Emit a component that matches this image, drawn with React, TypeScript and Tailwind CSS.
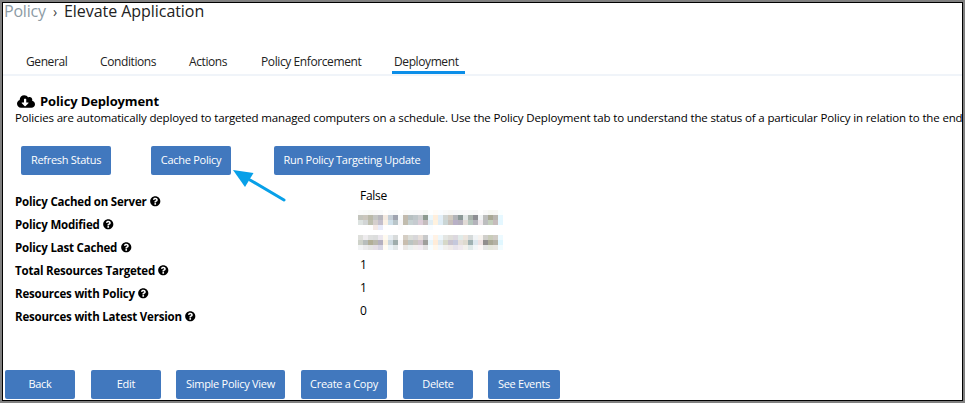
import { FaCloudDownloadAlt, FaQuestionCircle } from "react-icons/fa";

const firstStamp = [
  "#fbfbfb #f9faf9 #f7f8f6 #f9f8f8 #f9fafa #fffefd #fafbfc #f8fafa #ffffff #fafaf8 #fafbfb #f9fafa #fafafa #f6f8f6 #ffffff #fffcf8 #fbfdff #fafafa #f8f8f6 #f8f8f9 #f8faf9 #fafafa #f8faf9 #f8f8f8 #ffffff #fafafa #f6f7f3 #f7f7f5 #fbffff",
  "#c4c5bd #cbc6bd #bab9a9 #c4c5c3 #b8b7bd #f3e9e0 #c4ced6 #9fa4b0 #f7fafa #c2baad #b6c0c1 #bec6c9 #cdced0 #8e9b91 #ebf6fa #ffeedb #e3eff8 #d1d5d3 #d1cac0 #b2b4b8 #8b9896 #e1e6e5 #a9b2ac #8d8e93 #f1f4f5 #bdbebd #a8a895 #b8b5af #e6f8ff",
  "#dde3e1 #d2d5d5 #bebfae #d5cfcd #c4bfcc #fbf2e5 #cfe0ea #b9c5c9 #f6f5f7 #c1bcae #c7d2d3 #c6cbd0 #dccdd8 #c5bdbe #e1edf3 #fff2df #dfedf6 #cad5d5 #c7c0ba #b8b0c6 #b5b1bd #e1dbd6 #b6c7be #b4b3bb #efe8ec #bdbebf #c3cfbc #c6bcbc #e4f7ff",
  "#ffffff #ffffff #fefefe #f4e9e5 #e8ebfa #ffffff #ffffff #ffffff #fbfbfb #fefefe #ffffff #ffffff #ffffff #fefefe #f9fdff #ffffff #ffffff #ffffff #ffffff #ffffff #ffffff #ffffff #ffffff #ffffff #ffffff #ffffff #ffffff #ffffff #ffffff",
];

const secondStamp = [
  "#dedfdb #eeecee #dfe0df #dcdddd #ebe7ee #fffaf0 #e8eef2 #d8dbdb #ffffff #d5cec4 #dcded9 #d8d7da #e8e0db #c8c9ca #f7fbff #fff2e5 #eef7fb #e4e6e3 #dfdeda #dcd8df #e1ebe9 #ece4dd #d5dada #f1f4f6 #f7f3ef #d0cfcb #c9ccb9 #d0cbc5 #edfaff",
  "#ced2c9 #b8bebc #b2af98 #bab9ae #b4b0c0 #f9f0df #cad7de #9fadac #f7f6f7 #c8bdae #bbc4c2 #c8c5bf #d1c4ce #9e9f9c #e8f5fa #ffecd8 #dee9ef #d6d8c8 #c9c3cf #c5c8dc #e5dfda #dedacf #9fb1b2 #dde7ee #efe2e3 #918e8e #aaa996 #b4b2a5 #e0f7ff",
  "#f2f4f5 #ebebec #e4e5e4 #e5dfe7 #d7d6e4 #fffcf4 #edf4f8 #e1e7e8 #fdfcfe #eae7e5 #ebf0f0 #f3f0ef #f2edf3 #e3e2e3 #f6fdff #fff7eb #f1f7fc #f1f0ee #efeae8 #e7e3eb #efe9ee #f3f1ed #e0e9e9 #f3f6f8 #fcf7f7 #e5e5e5 #e5e7dd #e9e7e1 #f2fcff",
];

function Redacted({ rows }: { rows: string[] }) {
  return (
    <div className="-ml-0.5 grid w-[145px] grid-cols-[repeat(29,5px)] auto-rows-[5px]">
      {rows.flatMap((row, y) =>
        row.split(" ").map((color, x) => <i key={`${y}-${x}`} style={{ backgroundColor: color }} />)
      )}
    </div>
  );
}

function Button({ label, className }: { label: string; className: string }) {
  return (
    <button className={`flex h-[29px] shrink-0 items-center justify-center rounded-[2px] bg-[#4178be] text-[11px] font-medium tracking-[-0.28px] whitespace-nowrap text-white ${className}`}>
      {label}
    </button>
  );
}

const labels = [
  ["Policy Cached on Server", "w-[132px]"],
  ["Policy Modified", "w-[85px]"],
  ["Policy Last Cached", "w-[103px]"],
  ["Total Resources Targeted", "w-[140px]"],
  ["Resources with Policy", "w-[120px]"],
  ["Resources with Latest Version", "w-[167px]"],
];

export default function App() {
  return (
    <div className="h-[403px] w-[965px] overflow-hidden bg-[#808080] pt-0.5 pl-0.5 font-['Open_Sans',sans-serif] text-black">
      <main className="relative flex h-[399px] w-[961px] flex-col border border-black bg-white">
        <h1 className="flex h-[18px] items-start pl-px text-[16px] leading-[17px] whitespace-nowrap">
          <span className="w-[43px] tracking-[-0.2px] text-[#8c9ba5]">Policy</span>
          <span className="w-[17px] pl-[6px] text-[14px] text-[#444]">›</span>
          <span className="tracking-[-0.05px] text-[#222]">Elevate Application</span>
        </h1>
        <nav className="mt-[26px] flex h-[29px] shrink-0 border-b-2 border-[#f0f4f9] pl-[23px] text-[12px] leading-[30px] tracking-[-0.4px] whitespace-nowrap text-[#222]">
          <span className="w-[74px]">General</span>
          <span className="w-[89px]">Conditions</span>
          <span className="w-[72px]">Actions</span>
          <span className="w-[131px]">Policy Enforcement</span>
          <span className="h-[27px] w-[73px] border-b-3 border-[#0b8ee8] pl-[2px]">Deployment</span>
        </nav>
        <section className="flex shrink-0 flex-col pt-[17px] pl-3">
          <h2 className="flex h-[16px] items-center gap-[5px] pl-0.5 text-[13px] leading-4 font-bold tracking-[-0.13px] whitespace-nowrap">
            <FaCloudDownloadAlt className="h-[15px] w-[18px]" />
            Policy Deployment
          </h2>
          <p className="h-[18px] text-[11.5px] leading-[17px] tracking-[-0.15px] whitespace-nowrap">
            Policies are automatically deployed to targeted managed computers on a schedule. Use the Policy Deployment tab to understand the status of a particular Policy in relation to the end
          </p>
        </section>
        <div className="mt-[18.5px] flex shrink-0 pl-[18px]">
          <Button label="Refresh Status" className="w-[90px]" />
          <Button label="Cache Policy" className="ml-10 w-[80px]" />
          <Button label="Run Policy Targeting Update" className="ml-[43px] w-[156px]" />
        </div>
        <section className="-mt-[0.5px] flex shrink-0 pl-3">
          <dl className="w-[345px] pt-4 text-[11.5px] leading-[23px] font-bold tracking-[-0.2px] whitespace-nowrap">
            {labels.map(([label, width]) => (
              <dt key={label} className="flex h-[23px] items-center gap-[3px]">
                <span className={width}>{label}</span>
                <FaQuestionCircle className="size-[10.5px]" />
              </dt>
            ))}
          </dl>
          <div className="pt-[11px] text-[12px] leading-[22px] tracking-[-0.3px]">
            <div className="h-[25px]">False</div>
            <div className="h-[25px]"><Redacted rows={firstStamp} /></div>
            <div className="h-[19px]"><Redacted rows={secondStamp} /></div>
            <div className="h-[23px]">1</div>
            <div className="h-[23px]">1</div>
            <div className="h-[23px]">0</div>
          </div>
        </section>
        <footer className="mt-auto flex shrink-0 pb-px pl-0.5">
          <Button label="Back" className="w-[70px]" />
          <Button label="Edit" className="ml-4 w-[70px]" />
          <Button label="Simple Policy View" className="ml-[15px] w-[109px]" />
          <Button label="Create a Copy" className="ml-4 w-[86px]" />
          <Button label="Delete" className="ml-4 w-[70px]" />
          <Button label="See Events" className="ml-[15px] w-[72px]" />
        </footer>
        <svg className="absolute top-[162px] left-[228px]" width="60" height="42" viewBox="0 0 60 42">
          <path d="M19 15 53 35" stroke="#08a0e8" strokeWidth="3" strokeLinecap="round" />
          <path d="M2 5 22.5 8 14 22Z" fill="#08a0e8" />
        </svg>
      </main>
    </div>
  );
}
